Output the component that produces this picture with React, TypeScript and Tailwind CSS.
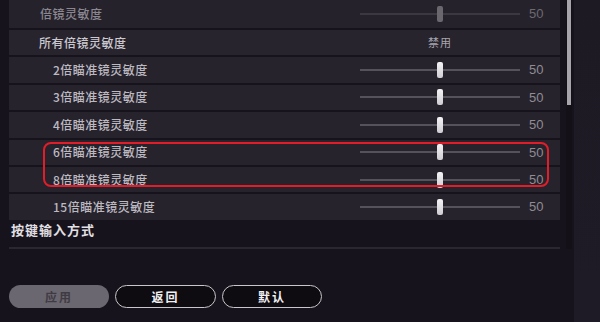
const rows = [
  { label: "2倍瞄准镜灵敏度", value: 50 },
  { label: "3倍瞄准镜灵敏度", value: 50 },
  { label: "4倍瞄准镜灵敏度", value: 50 },
  { label: "6倍瞄准镜灵敏度", value: 50 },
  { label: "8倍瞄准镜灵敏度", value: 50 },
  { label: "15倍瞄准镜灵敏度", value: 50 },
];

const Slider = ({ dim = false }: { dim?: boolean }) => (
  <div className="relative flex h-full w-[160px] items-center">
    <div className={`h-[2px] w-full ${dim ? "bg-[#3c3842]" : "bg-[#56525c]"}`} />
    <div
      className={`absolute left-[77px] h-[16px] w-[6px] rounded-[2px] ${
        dim ? "bg-[#6a676e]" : "bg-gradient-to-b from-[#f4f3f5] to-[#cfcdd2]"
      }`}
    />
  </div>
);

const App = () => {
  return (
    <div
      className="flex h-[322px] w-[600px] overflow-hidden bg-[#17131c] text-[#c4c1c8]"
      style={{ fontFamily: '"Noto Sans CJK SC", "Noto Sans", sans-serif' }}
    >
      <div className="flex w-[574px] flex-col">
        <div className="flex">
          <div className="relative w-[560px] pl-[9px]">
            <div className="flex flex-col gap-[2px]">
              <div className="flex h-[28px] items-center bg-[#26222b]">
                <span className="flex-1 pl-[31px] text-[12px] font-medium tracking-[0.5px] text-[#8a8790]">
                  倍镜灵敏度
                </span>
                <Slider dim />
                <span className="ml-[9px] w-[22px] text-[13px] text-[#6c6970]" style={{ fontFamily: '"Liberation Sans", sans-serif' }}>
                  50
                </span>
                <span className="w-[9px]" />
              </div>
              <div className="flex h-[25.4px] items-center bg-[#28242e]">
                <span className="flex-1 pl-[30px] text-[12px] font-medium tracking-[0.5px] text-[#cbc8cf]">
                  所有倍镜灵敏度
                </span>
                <span className="w-[160px] text-center text-[11px] tracking-[1px] text-[#a9a6ae]">
                  禁用
                </span>
                <span className="w-[40px]" />
              </div>
              {rows.map((r) => (
                <div key={r.label} className="flex h-[25.4px] items-center bg-[#27232c]">
                  <span className="flex-1 pl-[44px] text-[12px] font-medium tracking-[0.5px] text-[#bcb9c1]">
                    {r.label}
                  </span>
                  <Slider />
                  <span className="ml-[9px] w-[22px] text-[13px] text-[#8f8c94]" style={{ fontFamily: '"Liberation Sans", sans-serif' }}>
                    {r.value}
                  </span>
                  <span className="w-[9px]" />
                </div>
              ))}
            </div>
            <div className="absolute left-[43px] top-[142px] h-[45px] w-[506px] rounded-[8px] border-2 border-[#e11d2a]" />
            <div className="flex h-[20px] items-center pl-[2px] pt-[1px] text-[13px] font-bold tracking-[1px] text-[#e2e0e5]">
              按键输入方式
            </div>
            <div className="mt-[7px] h-[2px] bg-[#2b2731]" />
          </div>
          <div className="ml-[6px] flex h-[249px] w-[6px] justify-center bg-[#131017]">
            <div className="h-[105px] w-[4px] bg-[#a7a4ab]" />
          </div>
        </div>
        <div className="mt-[36px] flex gap-[6px] pl-[9px]">
          <button className="h-[23px] w-[100px] rounded-full bg-[#6b6770] text-[12px] font-bold tracking-[2px] text-[#3f3b44]">
            应用
          </button>
          <button className="h-[23px] w-[101px] rounded-full border-[1.5px] border-[#c9c6cc] bg-[#0e0b11] text-[12px] font-bold tracking-[2px] text-[#f1f0f2]">
            返回
          </button>
          <button className="h-[23px] w-[100px] rounded-full border-[1.5px] border-[#c9c6cc] bg-[#0e0b11] text-[12px] font-bold tracking-[2px] text-[#f1f0f2]">
            默认
          </button>
        </div>
      </div>
      <div className="flex-1 bg-gradient-to-b from-[#1d1a24] to-[#1e1b26]" />
    </div>
  );
};

export default App;
